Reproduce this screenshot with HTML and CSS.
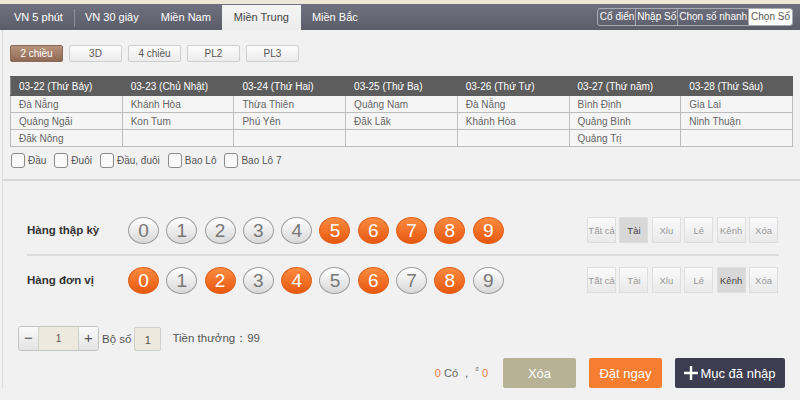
FILE: index.html
```html
<!DOCTYPE html>
<html lang="vi">
<head>
  <meta charset="UTF-8" />
  <title>Chọn Số - Miền Trung</title>
  <link rel="stylesheet" href="styles.css">
</head>
<body>

  <div class="topstrip"></div>

  <div class="nav">
    <ul class="tabs">
      <li>VN 5 phút</li>
      <li>VN 30 giây</li>
      <li class="plain">Miền Nam</li>
      <li class="active">Miền Trung</li>
      <li class="plain">Miền Bắc</li>
    </ul>
    <div class="views">
      <span>Cổ điển</span>
      <span>Nhập Số</span>
      <span>Chọn số nhanh</span>
      <span class="on">Chọn Số</span>
    </div>
  </div>

  <div class="page">
    <div class="panel">
      <div class="modes">
        <button class="mode on">2 chiều</button>
        <button class="mode">3D</button>
        <button class="mode">4 chiều</button>
        <button class="mode">PL2</button>
        <button class="mode">PL3</button>
      </div>

      <table class="schedule">
        <tr>
          <th>03-22 (Thứ Bảy)</th>
          <th>03-23 (Chủ Nhật)</th>
          <th>03-24 (Thứ Hai)</th>
          <th>03-25 (Thứ Ba)</th>
          <th>03-26 (Thứ Tư)</th>
          <th>03-27 (Thứ năm)</th>
          <th>03-28 (Thứ Sáu)</th>
        </tr>
        <tr>
          <td>Đà Nẵng</td><td>Khánh Hòa</td><td>Thừa Thiên</td><td>Quảng Nam</td><td>Đà Nẵng</td><td>Bình Định</td><td>Gia Lai</td>
        </tr>
        <tr>
          <td>Quảng Ngãi</td><td>Kon Tum</td><td>Phú Yên</td><td>Đăk Lăk</td><td>Khánh Hòa</td><td>Quảng Bình</td><td>Ninh Thuận</td>
        </tr>
        <tr>
          <td>Đăk Nông</td><td></td><td></td><td></td><td></td><td>Quảng Trị</td><td></td>
        </tr>
      </table>

      <div class="checks">
        <label class="check"><span class="box"></span>Đầu</label>
        <label class="check"><span class="box"></span>Đuôi</label>
        <label class="check"><span class="box"></span>Đầu, đuôi</label>
        <label class="check"><span class="box"></span>Bao Lô</label>
        <label class="check"><span class="box"></span>Bao Lô 7</label>
      </div>
    </div>

    <div class="picker">
      <div class="pick-row">
        <div class="pick-label">Hàng thập kỳ</div>
        <div class="balls">
          <span class="ball">0</span>
          <span class="ball">1</span>
          <span class="ball">2</span>
          <span class="ball">3</span>
          <span class="ball">4</span>
          <span class="ball hot">5</span>
          <span class="ball hot">6</span>
          <span class="ball hot">7</span>
          <span class="ball hot">8</span>
          <span class="ball hot">9</span>
        </div>
        <div class="filters">
          <button>Tất cả</button>
          <button class="on">Tài</button>
          <button>Xỉu</button>
          <button>Lẻ</button>
          <button>Kênh</button>
          <button>Xóa</button>
        </div>
      </div>
      <div class="pick-row">
        <div class="pick-label">Hàng đơn vị</div>
        <div class="balls">
          <span class="ball hot">0</span>
          <span class="ball">1</span>
          <span class="ball hot">2</span>
          <span class="ball">3</span>
          <span class="ball hot">4</span>
          <span class="ball">5</span>
          <span class="ball hot">6</span>
          <span class="ball">7</span>
          <span class="ball hot">8</span>
          <span class="ball">9</span>
        </div>
        <div class="filters">
          <button>Tất cả</button>
          <button>Tài</button>
          <button>Xỉu</button>
          <button>Lẻ</button>
          <button class="on">Kênh</button>
          <button>Xóa</button>
        </div>
      </div>
    </div>

    <div class="amount">
      <div class="stepper">
        <span class="step">&minus;</span>
        <span class="step-val">1</span>
        <span class="step">+</span>
      </div>
      <span class="set-label">Bộ số</span>
      <span class="set-val">1</span>
      <span class="prize">Tiền thưởng：99</span>
    </div>

    <div class="actions">
      <span class="summary"><em>0</em> Có ， <sup>₫</sup> <em>0</em></span>
      <button class="act clear">Xóa</button>
      <button class="act bet">Đặt ngay</button>
      <button class="act added">
        <svg width="14" height="14" viewBox="0 0 14 14"><path d="M7 0v14M0 7h14" stroke="#fff" stroke-width="2.4"/></svg>
        Mục đã nhập
      </button>
    </div>
  </div>

</body>
</html>
```

FILE: styles.css
```css
html, body {
  margin: 0;
  padding: 0;
  font-family: 'Liberation Sans', Arial, sans-serif;
  background: #f1f1f1;
  color: #555;
}

.topstrip {
  height: 4px;
  background: #eee7d8;
}

/* top navigation */
.nav {
  height: 26px;
  display: flex;
  align-items: stretch;
  justify-content: space-between;
  background: linear-gradient(#707180, #5c5d69);
}

.tabs {
  list-style: none;
  margin: 0;
  padding: 0 0 0 2px;
  display: flex;
}

.tabs li {
  color: #fff;
  font-size: 11px;
  line-height: 26px;
  padding: 0 11px;
  position: relative;
}

.tabs li + li::before {
  content: '';
  position: absolute;
  left: 0;
  top: 5px;
  bottom: 3px;
  border-left: 1px solid #8d8e9a;
}

.tabs li:first-child {
  padding: 0 11px 0 12px;
}

.tabs li.plain::before,
.tabs li.active::before {
  display: none;
}

.tabs li.active {
  background: linear-gradient(#f4f4f4, #ececec);
  color: #444;
  margin-top: 1px;
  line-height: 25px;
  padding: 0 12px;
}

.views {
  display: flex;
  align-self: center;
  margin-right: 7px;
  border: 1px solid #a9aab2;
  border-radius: 3px;
  overflow: hidden;
}

.views span {
  font-size: 10px;
  color: #fff;
  line-height: 16px;
  padding: 0 1px;
  border-left: 1px solid #a9aab2;
}

.views span:first-child {
  border-left: none;
  padding-left: 2px;
}

.views span.on {
  background: #fff;
  color: #555;
  padding: 0 2px;
}

/* main area */
.page {
  margin-left: 2px;
  border-left: 1px solid #dadada;
}

.panel {
  padding: 15px 7px 11px 7px;
  border-bottom: 2px solid #d6d6d6;
}

.modes {
  display: flex;
  gap: 6px;
}

.mode {
  width: 53px;
  height: 17px;
  padding: 0;
  font-family: inherit;
  font-size: 10px;
  color: #555;
  background: linear-gradient(#fdfdfd, #ebebeb);
  border: 1px solid #cfcfcf;
  border-radius: 2px;
}

.mode.on {
  color: #fff;
  background: linear-gradient(#b8937b, #8e6a55);
  border-color: #8b6a57;
}

.schedule {
  width: 783px;
  margin-top: 14px;
  border-collapse: collapse;
  table-layout: fixed;
  font-size: 10px;
}

.schedule th {
  background: #5d5d5d;
  color: #fff;
  font-weight: normal;
  text-align: left;
  height: 18px;
  padding: 0 0 0 8px;
  border: 1px solid #5d5d5d;
  border-left-color: #8a8a8a;
}

.schedule td {
  height: 16px;
  padding: 0 0 0 8px;
  color: #666;
  background: #f5f5f5;
  border: 1px solid #bcbcbc;
}

.checks {
  display: flex;
  gap: 8px;
  margin-top: 6px;
  padding-left: 1px;
}

.check {
  display: flex;
  align-items: center;
  gap: 3px;
  font-size: 10px;
  color: #555;
  height: 15px;
}

.box {
  width: 12px;
  height: 13px;
  border: 1px solid #8a8a8a;
  border-radius: 3px;
  background: #fafafa;
}

/* number picker */
.picker {
  margin: 25px 21px 0 24px;
}

.pick-row {
  display: flex;
  align-items: center;
  height: 48px;
  padding-right: 1px;
}

.pick-row + .pick-row {
  border-top: 2px solid #dcdcdc;
}

.pick-label {
  width: 101px;
  font-size: 11.5px;
  font-weight: bold;
  color: #333;
}

.balls {
  display: flex;
  gap: 7.3px;
}

.ball {
  width: 29px;
  height: 25px;
  border-radius: 50%;
  border: 1px solid #9d9d9d;
  background: linear-gradient(#ffffff, #d8d8d8);
  color: #777;
  font-size: 19px;
  line-height: 25px;
  text-align: center;
}

.ball.hot {
  border-color: #e0611c;
  background: linear-gradient(#fb8b40, #e8580f);
  color: #fff;
}

.filters {
  margin-left: auto;
  display: flex;
  gap: 3.4px;
}

.filters button {
  width: 29px;
  height: 26px;
  padding: 0;
  font-family: inherit;
  font-size: 9.5px;
  white-space: nowrap;
  color: #999;
  border: 1px solid #dedede;
  background: linear-gradient(#fafafa, #e9e9e9);
}

.filters button.on {
  background: #d8d8d8;
  color: #444;
}

/* amount */
.amount {
  display: flex;
  align-items: center;
  margin: 22px 0 0 15px;
  font-size: 11.5px;
}

.stepper {
  display: flex;
  height: 23px;
  border: 1px solid #c2c2c2;
  border-radius: 3px;
  overflow: hidden;
}

.step {
  width: 19px;
  text-align: center;
  line-height: 22px;
  font-size: 15px;
  color: #555;
  background: linear-gradient(#fafafa, #e3e3e3);
}

.step-val {
  width: 39px;
  text-align: center;
  line-height: 23px;
  font-size: 10px;
  background: #ede9dc;
  border-left: 1px solid #cfcfcf;
  border-right: 1px solid #cfcfcf;
}

.set-label {
  margin-left: 3px;
}

.set-val {
  width: 25px;
  height: 22px;
  margin-left: 3px;
  text-align: center;
  line-height: 24px;
  font-size: 11px;
  background: #ede9dc;
  border: 1px solid #cfcfcf;
  border-radius: 2px;
}

.prize {
  margin-left: 11px;
}

/* actions */
.actions {
  display: flex;
  justify-content: flex-end;
  align-items: center;
  gap: 13px;
  margin-top: 7px;
  padding-right: 15px;
}

.summary {
  font-size: 11px;
  color: #666;
  margin-right: 2px;
}

.summary em {
  font-style: normal;
  color: #f07a3a;
}

.summary sup {
  font-size: 7px;
}

.act {
  height: 30px;
  border: none;
  border-radius: 2px;
  font-family: inherit;
  font-size: 13px;
  color: #fff;
  padding: 0;
}

.clear {
  width: 73px;
  background: #b7b195;
}

.bet {
  width: 73px;
  background: #f57e30;
}

.added {
  width: 110px;
  background: #3c3d4f;
  display: flex;
  align-items: center;
  justify-content: center;
  gap: 2px;
}
```
